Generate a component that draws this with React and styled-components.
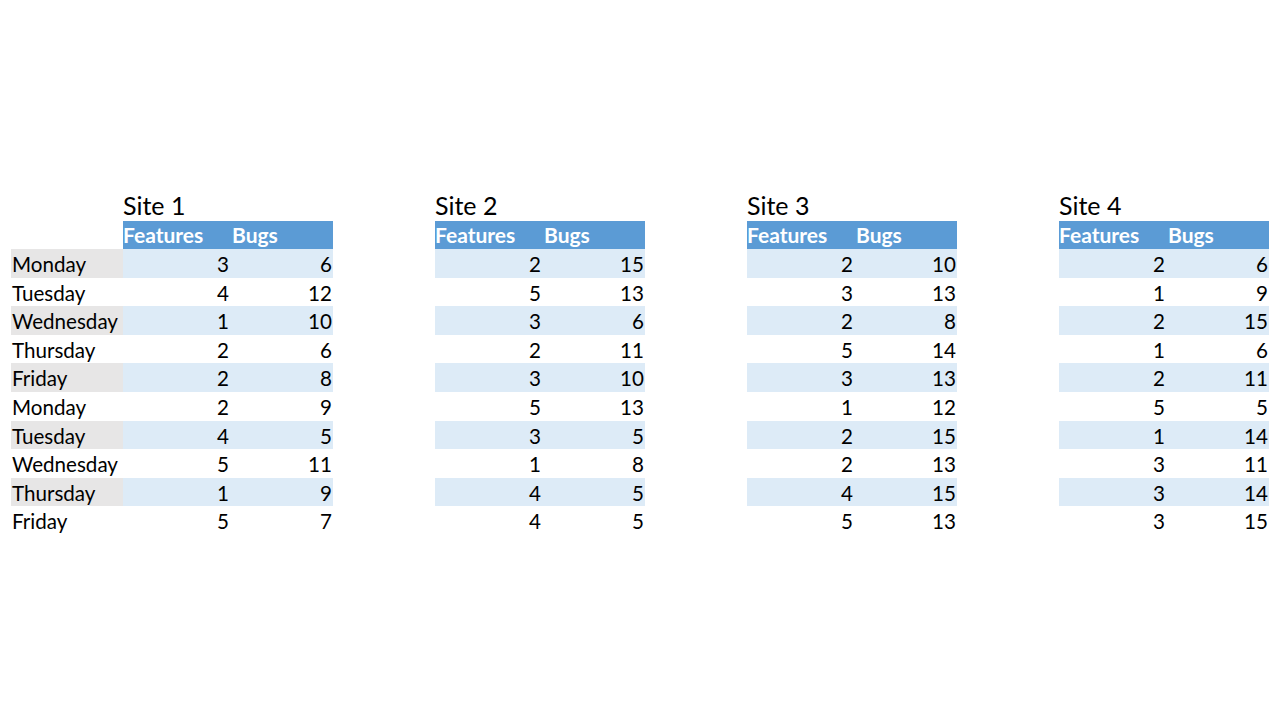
import styled, { createGlobalStyle } from "styled-components";

const GlobalStyle = createGlobalStyle`
  html, body {
    margin: 0;
    background: #ffffff;
  }
  body {
    font-family: Lato, "Open Sans", "Liberation Sans", sans-serif;
    color: #000000;
  }
`;

const days = [
  "Monday",
  "Tuesday",
  "Wednesday",
  "Thursday",
  "Friday",
  "Monday",
  "Tuesday",
  "Wednesday",
  "Thursday",
  "Friday"
];

const sites = [
  {
    name: "Site 1",
    features: [3, 4, 1, 2, 2, 2, 4, 5, 1, 5],
    bugs: [6, 12, 10, 6, 8, 9, 5, 11, 9, 7]
  },
  {
    name: "Site 2",
    features: [2, 5, 3, 2, 3, 5, 3, 1, 4, 4],
    bugs: [15, 13, 6, 11, 10, 13, 5, 8, 5, 5]
  },
  {
    name: "Site 3",
    features: [2, 3, 2, 5, 3, 1, 2, 2, 4, 5],
    bugs: [10, 13, 8, 14, 13, 12, 15, 13, 15, 13]
  },
  {
    name: "Site 4",
    features: [2, 1, 2, 1, 2, 5, 1, 3, 3, 3],
    bugs: [6, 9, 15, 6, 11, 5, 14, 11, 14, 15]
  }
];

const Board = styled.div`
  display: flex;
  padding: 185px 0 0 11px;
  width: 1280px;
  height: 720px;
  box-sizing: border-box;
`;

const DayColumn = styled.div`
  width: 112px;
  display: flex;
  flex-direction: column;
  padding-top: 64px;
`;

const DayCell = styled.div`
  box-sizing: border-box;
  height: 28.6px;
  padding-top: 1px;
  line-height: 28px;
  font-size: 20.6px;
  padding-left: 1px;
  white-space: nowrap;
  background: ${(p) => (p.striped ? "#e7e6e6" : "transparent")};
`;

const SiteList = styled.div`
  display: flex;
  gap: 102px;
`;

const SiteTable = styled.div`
  width: 210px;
  display: flex;
  flex-direction: column;
`;

const Title = styled.div`
  box-sizing: border-box;
  height: 36px;
  display: flex;
  align-items: flex-end;
  padding-bottom: 2px;
  font-size: 25px;
  line-height: 28px;
`;

const Row = styled.div`
  box-sizing: border-box;
  display: grid;
  grid-template-columns: 107px 103px;
  height: ${(p) => (p.header ? "28px" : "28.6px")};
  padding-top: ${(p) => (p.header ? "0" : "1px")};
  line-height: 28px;
  font-size: 20.6px;
  background: ${(p) =>
    p.header ? "#5b9bd5" : p.striped ? "#ddebf7" : "transparent"};
`;

const HeadCell = styled.div`
  color: #ffffff;
  font-weight: 700;
  font-size: 21px;
  white-space: nowrap;
  padding-left: ${(p) => (p.second ? "2px" : "0")};
`;

const NumCell = styled.div`
  text-align: right;
  padding-right: ${(p) => (p.second ? "1px" : "1px")};
`;

export default function App() {
  return (
    <>
      <GlobalStyle />
      <Board>
        <DayColumn>
          {days.map((day, i) => (
            <DayCell key={i} striped={i % 2 === 0}>
              {day}
            </DayCell>
          ))}
        </DayColumn>
        <SiteList>
          {sites.map((site) => (
            <SiteTable key={site.name}>
              <Title>{site.name}</Title>
              <Row header>
                <HeadCell>Features</HeadCell>
                <HeadCell second>Bugs</HeadCell>
              </Row>
              {site.features.map((f, i) => (
                <Row key={i} striped={i % 2 === 0}>
                  <NumCell>{f}</NumCell>
                  <NumCell second>{site.bugs[i]}</NumCell>
                </Row>
              ))}
            </SiteTable>
          ))}
        </SiteList>
      </Board>
    </>
  );
}
